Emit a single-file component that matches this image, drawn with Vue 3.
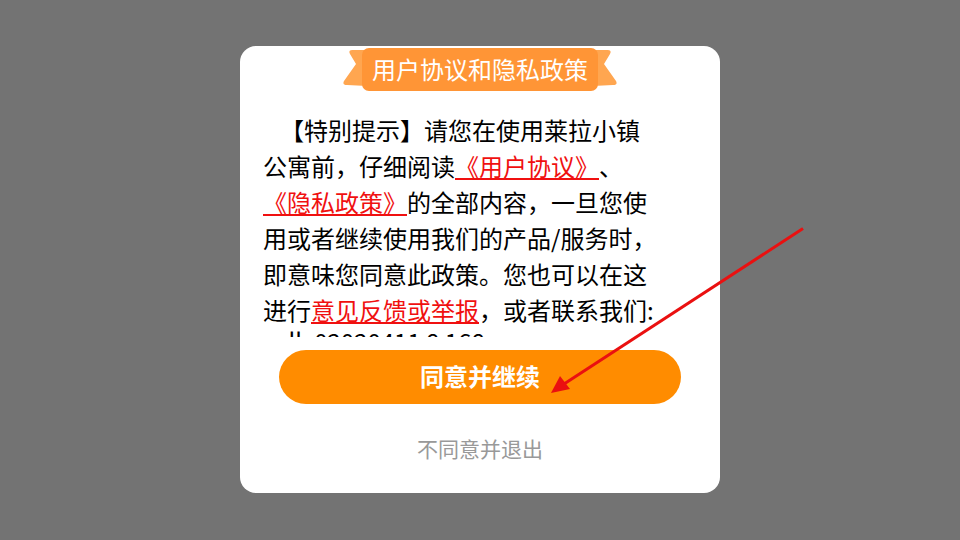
<script setup>
const title = '用户协议和隐私政策'
</script>

<template>
  <div class="overlay">
    <div class="dialog">
      <div class="ribbon">
        <svg class="tails" viewBox="0 0 274 46" width="274" height="46">
          <path d="M24 2 L9 2 Q5 2 7 6 L13 16 L1 33 Q-1 37 4 37 L24 38 Z" fill="#ffa650" />
          <path d="M250 2 L265 2 Q269 2 267 6 L261 16 L273 33 Q275 37 270 37 L250 38 Z" fill="#ffa650" />
        </svg>
        <div class="ribbon-body">{{ title }}</div>
      </div>
      <div class="content">
        <p class="text">
          <span class="indent"></span>【特别提示】请您在使用莱拉小镇公寓前，仔细阅读<span class="link">《用户协议》</span>、<span class="link">《隐私政策》</span>的全部内容，一旦您使用或者继续使用我们的产品/服务时，即意味您同意此政策。您也可以在这进行<span class="link">意见反馈或举报</span>，或者联系我们:<span class="contact">call: 02020411 8 168</span>
        </p>
      </div>
      <button class="agree">同意并继续</button>
      <button class="refuse">不同意并退出</button>
    </div>
    <svg class="arrow" viewBox="0 0 960 540" width="960" height="540">
      <line x1="803" y1="228.5" x2="564" y2="384" stroke="#ea1010" stroke-width="3" />
      <polygon points="551,393 560,376 570,389" fill="#ea1010" />
    </svg>
  </div>
</template>

<style>
html, body { margin: 0; padding: 0; }
</style>

<style scoped>
.overlay {
  position: relative;
  width: 960px;
  height: 540px;
  overflow: hidden;
  background: #737373;
  display: flex;
  justify-content: center;
  padding-top: 46px;
  box-sizing: border-box;
  font-family: "Noto Sans CJK SC", "Liberation Sans", sans-serif;
}
.dialog {
  width: 480px;
  height: 447px;
  background: #fff;
  border-radius: 16px;
  display: flex;
  flex-direction: column;
  align-items: center;
}
.ribbon {
  position: relative;
  width: 274px;
  height: 46px;
  margin-top: 2px;
  display: flex;
  justify-content: center;
  flex: none;
}
.tails { position: absolute; left: 0; top: 0; }
.ribbon-body {
  width: 236px;
  height: 43px;
  background: #ff9536;
  border-radius: 7px;
  color: #fff;
  font-size: 24px;
  line-height: 42px;
  text-align: center;
  white-space: nowrap;
  position: relative;
}
.content {
  align-self: flex-start;
  margin-left: 23px;
  width: 396px;
  height: 225px;
  margin-top: 18px;
  overflow: hidden;
  flex: none;
}
.text {
  margin: 0;
  font-size: 24px;
  line-height: 36px;
  color: #000;
}
.indent { display: inline-block; width: 17px; }
.link { display: inline-block; color: #f01010; text-decoration: underline; }
.contact { display: block; margin-top: -5px; }
.agree {
  width: 402px;
  height: 54px;
  margin-top: 13px;
  padding: 0 0 4px;
  border: 0;
  border-radius: 27px;
  background: #ff8c00;
  color: #fff;
  font: 700 24px "Noto Sans CJK SC", sans-serif;
  flex: none;
}
.refuse {
  margin-top: 26px;
  border: 0;
  background: none;
  padding: 0;
  color: #999;
  font: 400 21px "Noto Sans CJK SC", sans-serif;
  line-height: 36px;
}
.arrow { position: absolute; left: 0; top: 0; pointer-events: none; }
</style>
